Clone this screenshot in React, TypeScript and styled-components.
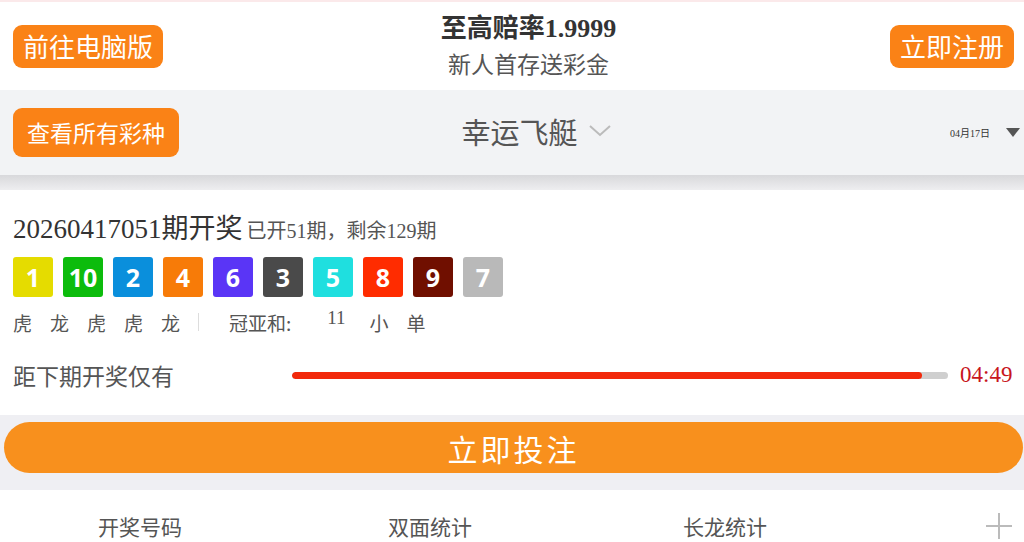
import * as React from "react";
import styled, { createGlobalStyle } from "styled-components";

const GlobalStyle = createGlobalStyle`
  body {
    margin: 0;
    background: #ffffff;
    font-family: "Noto Sans CJK SC", "Noto Sans", sans-serif;
  }
`;

const Page = styled.div`
  width: 1024px;
  height: 542px;
  overflow: hidden;
  background: #fff;
`;

const TopLine = styled.div`
  height: 2px;
  background: #fbe9ea;
`;

const Header = styled.header`
  height: 88px;
  display: grid;
  grid-template-columns: 1fr auto 1fr;
  align-items: center;
  padding: 0 10px 0 13px;
`;

const OrangeButton = styled.button<{ $h: number; $size: number; $px: number }>`
  height: ${(p) => p.$h}px;
  padding: 0 ${(p) => p.$px}px;
  border: none;
  border-radius: 9px;
  background: #fa8216;
  color: #fff;
  font-family: "Noto Sans CJK SC", sans-serif;
  font-size: ${(p) => p.$size}px;
  line-height: 1;
  white-space: nowrap;
`;

const Left = styled.div`
  display: flex;
  justify-content: flex-start;
`;

const Right = styled.div`
  display: flex;
  justify-content: flex-end;
  align-items: center;
`;

const Promo = styled.div`
  display: flex;
  flex-direction: column;
  align-items: center;
  padding-left: 30px;
`;

const PromoTitle = styled.div`
  font-family: "Liberation Serif", "Noto Sans CJK SC", serif;
  font-weight: 700;
  font-size: 26px;
  line-height: 34px;
  color: #333;
`;

const PromoSub = styled.div`
  font-size: 23px;
  line-height: 34px;
  color: #555;
`;

const SubBar = styled.div`
  height: 85px;
  background: #f2f3f5;
  display: grid;
  grid-template-columns: 1fr auto 1fr;
  align-items: center;
  padding: 0 4px 0 13px;
`;

const GameName = styled.div`
  display: flex;
  align-items: center;
  gap: 10px;
  padding-left: 40px;
  margin-top: -4px;
  font-size: 29px;
  color: #555;
`;

const DateText = styled.span`
  font-family: "Liberation Serif", "Noto Sans CJK SC", serif;
  font-size: 10px;
  color: #333;
  margin-right: 16px;
`;

const Shade = styled.div`
  height: 15px;
  background: linear-gradient(#d8d8db, #eeeef0);
`;

const Card = styled.section`
  background: #fff;
  padding: 22px 10px 25px 13px;
`;

const IssueRow = styled.div`
  display: flex;
  align-items: baseline;
  gap: 4px;
  color: #333;
`;

const Issue = styled.span`
  font-family: "Liberation Serif", "Noto Sans CJK SC", serif;
  font-size: 27px;
  line-height: 34px;
`;

const IssueNote = styled.span`
  font-family: "Liberation Serif", "Noto Sans CJK SC", serif;
  font-size: 20px;
  color: #555;
`;

const Balls = styled.div`
  display: flex;
  gap: 10px;
  margin-top: 11px;
`;

const Ball = styled.div<{ $bg: string }>`
  width: 40px;
  height: 40px;
  border-radius: 3px;
  background: ${(p) => p.$bg};
  color: #fff;
  display: flex;
  align-items: center;
  justify-content: center;
  font-family: "Noto Sans", sans-serif;
  font-weight: 700;
  font-size: 25px;
`;

const Results = styled.div`
  display: flex;
  align-items: center;
  margin-top: 12px;
  height: 26px;
  font-size: 19px;
  color: #555;
`;

const Word = styled.span`
  width: 37px;
`;

const Divider = styled.span`
  width: 1px;
  height: 18px;
  background: #ddd;
  margin: 0 30px 0 0;
`;

const Sum = styled.span`
  font-family: "Liberation Serif", serif;
  font-size: 19px;
  margin: -8px 24px 0 36px;
`;

const Countdown = styled.div`
  display: flex;
  align-items: center;
  margin-top: 25px;
  height: 30px;
`;

const CountLabel = styled.span`
  width: 279px;
  font-size: 23px;
  color: #555;
`;

const Track = styled.div`
  width: 656px;
  height: 7px;
  border-radius: 4px;
  background: #cfcfcf;
  overflow: hidden;
`;

const Fill = styled.div`
  height: 100%;
  border-radius: 4px;
  background: #f2290b;
`;

const Time = styled.span`
  margin-left: 12px;
  font-family: "Liberation Serif", serif;
  font-size: 23px;
  color: #c8161d;
`;

const BetArea = styled.div`
  background: #efeff3;
  padding: 7px 1px 17px 4px;
`;

const BetButton = styled.button`
  width: 100%;
  height: 51px;
  border: none;
  border-radius: 26px;
  background: #f8901d;
  color: #fff;
  font-family: "Noto Sans CJK SC", sans-serif;
  font-size: 30px;
  letter-spacing: 3px;
`;

const Tabs = styled.nav`
  box-sizing: border-box;
  height: 52px;
  padding-top: 20px;
  display: grid;
  grid-template-columns: 280px 300px 290px 1fr;
  align-items: center;
  font-size: 21px;
  line-height: 30px;
  color: #555;
`;

const Tab = styled.span`
  text-align: center;
`;

const PlusCell = styled.span`
  display: flex;
  justify-content: flex-end;
  padding-right: 12px;
`;

const balls = [
  { n: 1, c: "#e5dc00" },
  { n: 10, c: "#0cbc0c" },
  { n: 2, c: "#0a8fdc" },
  { n: 4, c: "#f77b08" },
  { n: 6, c: "#5a35f6" },
  { n: 3, c: "#4a4a4a" },
  { n: 5, c: "#1fdfdf" },
  { n: 8, c: "#ff2c00" },
  { n: 9, c: "#700f00" },
  { n: 7, c: "#b9b9b9" },
];

export default function App() {
  return (
    <Page>
      <GlobalStyle />
      <TopLine />
      <Header>
        <Left>
          <OrangeButton $h={43} $size={26} $px={10}>前往电脑版</OrangeButton>
        </Left>
        <Promo>
          <PromoTitle>至高赔率1.9999</PromoTitle>
          <PromoSub>新人首存送彩金</PromoSub>
        </Promo>
        <Right>
          <OrangeButton $h={43} $size={26} $px={10}>立即注册</OrangeButton>
        </Right>
      </Header>
      <SubBar>
        <Left>
          <OrangeButton $h={49} $size={23} $px={14}>查看所有彩种</OrangeButton>
        </Left>
        <GameName>
          幸运飞艇
          <svg width="24" height="14" viewBox="0 0 24 14">
            <path d="M2 2 L12 11 L22 2" fill="none" stroke="#bbb" strokeWidth="2" />
          </svg>
        </GameName>
        <Right>
          <DateText>04月17日</DateText>
          <svg width="14" height="9" viewBox="0 0 14 9">
            <path d="M0 0 H14 L7 9 Z" fill="#555" />
          </svg>
        </Right>
      </SubBar>
      <Shade />
      <Card>
        <IssueRow>
          <Issue>20260417051期开奖</Issue>
          <IssueNote>已开51期，剩余129期</IssueNote>
        </IssueRow>
        <Balls>
          {balls.map((b) => (
            <Ball key={b.n} $bg={b.c}>{b.n}</Ball>
          ))}
        </Balls>
        <Results>
          {["虎", "龙", "虎", "虎", "龙"].map((w, i) => (
            <Word key={i}>{w}</Word>
          ))}
          <Divider />
          <span>冠亚和:</span>
          <Sum>11</Sum>
          <Word>小</Word>
          <Word>单</Word>
        </Results>
        <Countdown>
          <CountLabel>距下期开奖仅有</CountLabel>
          <Track>
            <Fill style={{ width: `${(630 / 656) * 100}%` }} />
          </Track>
          <Time>04:49</Time>
        </Countdown>
      </Card>
      <BetArea>
        <BetButton>立即投注</BetButton>
      </BetArea>
      <Tabs>
        <Tab>开奖号码</Tab>
        <Tab>双面统计</Tab>
        <Tab>长龙统计</Tab>
        <PlusCell>
          <svg width="26" height="26" viewBox="0 0 26 26">
            <path d="M13 0 V26 M0 13 H26" stroke="#bbb" strokeWidth="2" />
          </svg>
        </PlusCell>
      </Tabs>
    </Page>
  );
}
